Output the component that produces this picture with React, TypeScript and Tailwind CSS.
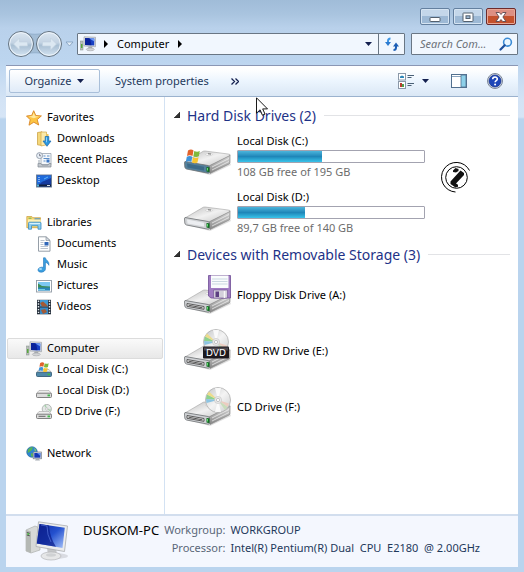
import type { ReactNode } from "react";

type TreeItem = { label: string; icon: ReactNode; active?: boolean };
type TreeGroup = TreeItem & { items: TreeItem[] };
type Drive = { label: string; icon: ReactNode; used?: number; info?: string };

const ComputerIcon = () => (
  <svg className="size-4" viewBox="0 0 16 16">
    <rect x="0.5" y="5" width="2.5" height="9" fill="#b9beba" stroke="#85908a" strokeWidth=".5" />
    <rect x="1" y="8" width="1.5" height="4" fill="#58a83c" />
    <path d="M4 .8 15.5 1.3v9.4L4 10z" fill="#e2e4e6" stroke="#8d949c" strokeWidth=".6" />
    <path d="M5 2l9.3.4v7L5 9z" fill="#1740c4" />
    <path d="M5 2l5 .2 1.5 7L5 9z" fill="#0a239a" />
    <path d="M9 2.3l5.3.1v3z" fill="#6f9cf5" />
    <path d="M8.5 10.6h3.5l.6 2.2H8z" fill="#a7abb0" />
    <ellipse cx="10.3" cy="13.4" rx="4" ry="1.4" fill="#d2d4d6" stroke="#9a9da1" strokeWidth=".5" />
  </svg>
);

const StarIcon = () => (
  <svg className="size-4" viewBox="0 0 16 16">
    <path
      d="M7.7.7l2.1 4.8 5.6.4-4.2 3.7 1.5 5.4-4.9-2.8L3 15.2l1.2-5.5L.5 6l5.2-.6z"
      fill="#fcc544"
      stroke="#d98728"
      strokeWidth=".9"
      strokeLinejoin="round"
    />
    <path d="M7.7 2.6l1.4 3.6 3.8.4-5.1 1.7-4.9-1.7 3.6-.5z" fill="#ffe9a0" />
  </svg>
);

const DownloadsIcon = () => (
  <svg className="size-4" viewBox="0 0 16 16">
    <path d="M1.5 1.5 6 .8v13.7l-4.5-.7z" fill="#f4d77b" stroke="#c79b38" strokeWidth=".7" />
    <path d="M5 1h5.5v12.8L5 15z" fill="#fbe9a8" stroke="#d1a746" strokeWidth=".7" />
    <path d="M10 3h2.5v8H10z" fill="#e8c35e" />
    <path d="M9.2 5.5h3.6V10H15l-4 5.3L7 10h2.2z" fill="#2b96df" stroke="#1767ad" strokeWidth=".7" />
    <path d="M10 6.3h1v5h-1z" fill="#8fd3fb" />
  </svg>
);

const RecentIcon = () => (
  <svg className="size-4" viewBox="0 0 16 16">
    <path d="M5 1.5h10v11H5z" fill="#f4f7fa" stroke="#9aa5b0" strokeWidth=".8" />
    <path d="M7.5 4h2M11 4h2.5M7.5 6.5h6M7.5 9h2" stroke="#5d8ec7" />
    <rect x="10.5" y="7.5" width="3" height="3" fill="#3b76c4" />
    <circle cx="3.6" cy="3.6" r="3" fill="#e8eff6" stroke="#8e9aa8" strokeWidth=".9" />
    <path d="M3.6 1.8v2h1.5" fill="none" stroke="#556" strokeWidth=".7" />
    <path d="M2 11.5h3l1 1.5h6l1-1.5h2v3.5H2z" fill="#c0c5cb" stroke="#838b94" strokeWidth=".7" />
    <path d="M3 8v3.5" stroke="#9aa5b0" />
  </svg>
);

const DesktopIcon = () => (
  <svg className="size-4" viewBox="0 0 16 16">
    <rect x=".5" y="2" width="15" height="12" fill="#1a4ab5" stroke="#6e7f95" />
    <path d="M1 2.5h14v4L6 9 1 12z" fill="#1f6bdc" />
    <path d="M6 9l9-4v7H4z" fill="#153b9e" />
    <path d="M3 4v1M3 6v1M3 8v1" stroke="#e4f1ff" />
    <path d="M8 6l4-2" stroke="#63b4f7" />
    <rect x="1" y="11.5" width="14" height="2" fill="#102040" />
    <rect x="1" y="11.5" width="2" height="2" fill="#57b6dc" />
    <path d="M11 12.5h3" stroke="#d7dfe8" />
  </svg>
);

const LibrariesIcon = () => (
  <svg className="size-4" viewBox="0 0 16 16">
    <path d="M.8 1.5h5l1 1.2h7.7v10H.8z" fill="#f6d673" stroke="#c89c3a" strokeWidth=".7" />
    <path d="M2 4.5h12.8v5H2z" fill="#fdf0b8" />
    <path d="M2.5 3.2h3" stroke="#6fb64a" />
    <path d="M8.5 3.8H14" stroke="#4b93cf" />
    <path
      d="M2.5 8.2q0-1 1-1H14q1 0 1 1v6h-3v-3.5H5.5v3.5h-3z"
      fill="#8cccee"
      stroke="#3a8cc0"
      strokeWidth=".8"
    />
    <path d="M3.5 8.5H14" stroke="#d7f1fd" />
  </svg>
);

const DocumentsIcon = () => (
  <svg className="size-4" viewBox="0 0 16 16">
    <path d="M2.5.8H10l4 3.7v10.7H2.5z" fill="#fff" stroke="#8a949e" strokeWidth=".9" />
    <path d="M10 .8v3.7h4z" fill="#d5dbe1" stroke="#8a949e" strokeWidth=".7" />
    <path d="M4.5 4.5h4M4.5 6.5h3M4.5 8.5h3M4.5 10.5H12M4.5 12.5H12" stroke="#a7b4c3" strokeWidth=".8" />
    <rect x="8.5" y="6" width="4" height="3.5" fill="#2f66b8" />
  </svg>
);

const MusicIcon = () => (
  <svg className="size-4" viewBox="0 0 16 16">
    <path
      d="M7.5.8h1.8c.5 2.6 4.3 3.2 3.6 7.5-.7-1.8-2-2.6-3.5-2.9v6.5c0 1.9-1.9 3.3-4.2 3.3-2 0-3.2-1-3.2-2.3 0-1.7 2.3-3.3 5.5-2.6z"
      fill="#3a9fe0"
      stroke="#2273b8"
      strokeWidth=".6"
    />
    <ellipse cx="4.5" cy="12" rx="1.6" ry="1" fill="#a3dcfb" />
  </svg>
);

const PicturesIcon = () => (
  <svg className="size-4" viewBox="0 0 16 16">
    <rect x=".5" y="2.5" width="15" height="11.5" fill="#fff" stroke="#909aa4" strokeWidth=".9" />
    <rect x="2" y="4" width="12" height="8.5" fill="#7cc8f2" />
    <path d="M2 5.5l4 2.5 8 .5V10H2z" fill="#3d8c55" />
    <path d="M2 9.5h12v3H2z" fill="#2a86b8" />
    <path d="M2 11.5h7" stroke="#70cfe5" />
  </svg>
);

const VideosIcon = () => (
  <svg className="size-4" viewBox="0 0 16 16">
    <rect x="1" y=".8" width="14" height="14.5" fill="#26303c" />
    <rect x="4" y="1" width="8" height="6.5" fill="#3f9bd6" />
    <rect x="4" y="8.5" width="8" height="6.5" fill="#3789c4" />
    <path d="M4 4l3-1.5L10 5l2 2.5H6zM5 11l4-1 2 3-4 2z" fill="#a35a35" />
    <path d="M2.5 1.5v14M13.5 1.5v14" stroke="#e8edf2" strokeWidth="1.4" strokeDasharray="1.4 1.4" />
  </svg>
);

const Flag = () => (
  <g>
    <path d="M3 1.5C5 .3 7 .3 8.500 1.5L7.5 7C6 6 4 6 2 7z" fill="#e2622b" />
    <path d="M9.3 2c1.8 1 3.8 1 5.5 0l-1 5.3c-1.8 1-3.7 1-5.5 0z" fill="#7fb93c" />
    <path d="M1.8 7.8c2-1 4-1 5.5 0l-1 5.2c-1.6-1-3.6-1-5.500 0z" fill="#3f93d8" />
    <path d="M8 8.3c1.8 1 3.8 1 5.5 0l-1 5.2c-1.7 1-3.7 1-5.5 0z" fill="#f7c52f" />
  </g>
);

const SmallDriveIcon = ({ kind }: { kind: "windows" | "plain" | "cd" }) => (
  <svg className="size-4" viewBox="0 0 16 16">
    {kind === "cd" && (
      <g>
        <circle cx="10.8" cy="5" r="4.6" fill="#e4e8e6" stroke="#9ba09e" strokeWidth=".7" />
        <path d="M10.8 5 8 1.5 10 .8zM10.8 5l3.5 2.5.7-2z" fill="#a9d1ae" />
        <circle cx="10.8" cy="5" r="1.2" fill="#fff" stroke="#999" strokeWidth=".5" />
      </g>
    )}
    <path d="M3 7.5h10l2.5 3H.5z" fill="#ededed" stroke="#a5a5a5" strokeWidth=".6" />
    <rect
      x=".5"
      y="10.2"
      width="15"
      height="4.3"
      rx="1"
      fill={kind === "windows" ? "#4f87a8" : "#dcdcdc"}
      stroke={kind === "windows" ? "#345d78" : "#757575"}
      strokeWidth=".9"
    />
    {kind === "cd" && <path d="M2.5 12.3h7" stroke="#666" />}
    <rect x="11.5" y="11.5" width="2.5" height="1.8" fill="#41b84a" />
    {kind === "windows" && (
      <g transform="translate(2 -.2) scale(.72)">
        <Flag />
      </g>
    )}
  </svg>
);

const NetworkIcon = () => (
  <svg className="size-4" viewBox="0 0 16 16">
    <circle cx="6" cy="6" r="5.3" fill="#2c86d3" stroke="#216196" strokeWidth=".6" />
    <path d="M2 3.5C4 1 6 1 7 1.5L6 4 3.5 6 1.5 7zM5 7l3 1-1.5 3L5 10z" fill="#57b35a" />
    <path d="M8 2l2.5 2L9 6z" fill="#7cc873" />
    <rect x="7.2" y="6" width="8.3" height="6.8" fill="#dce1e6" stroke="#747d88" strokeWidth=".7" />
    <rect x="8.3" y="7" width="6.1" height="4.7" fill="#1538b5" />
    <path d="M11 7h3.4v3z" fill="#5f8ef0" />
    <path d="M9 14.5h5l-1-1.7h-3z" fill="#a8aeb5" />
  </svg>
);

const DriveBody = ({ slot, blue }: { slot?: boolean; blue?: boolean }) => (
  <g>
    <path d="M3 37l23 6 21-10-2-4z" fill="#c9c9c9" opacity=".6" />
    <path d="M1 30 18 20q1-1 3-1l23 3q3 0 2 2L25 34z" fill="url(#drive-top)" stroke="#a3a3a3" strokeWidth=".6" />
    <path d="M25 34 46 23.5v7q0 1-1 1.5L26 41.5z" fill="url(#drive-side)" stroke="#7d7d7d" strokeWidth=".6" />
    <path
      d="M1 29.5 24 33.5q1.5.4 1.5 2v4q0 2-1.5 1.7L2.5 37Q1 36.5.8 35L.5 31q0-1.5.5-1.5z"
      fill={blue ? "#54809b" : "#cfd1d4"}
      stroke="#6f7275"
      strokeWidth=".8"
    />
    {slot ? (
      <path d="M3 32.5l17 3v2.8l-17-3z" fill="#eee" stroke="#4d4d4d" strokeWidth=".9" />
    ) : (
      <path d="M3 31.5l17 3.2v3.8l-16.5-3z" fill={blue ? "#3d6a88" : "#eceef1"} />
    )}
    {slot && <path d="M4.5 34.2l14 2.6" stroke="#555" />}
    <path d="M22.5 35v4.5l3 .8v-5z" fill="#176a26" />
    <path d="M23.5 36v2.5" stroke="#5ee06d" />
    <path d="M28 35l17-8.5M28 38l17-8.5" stroke="#f3f3f3" strokeWidth=".7" />
    <ellipse cx="25" cy="22.5" rx="3.2" ry="1.2" fill="#f7f7f7" stroke="#bbb" strokeWidth=".5" />
    <path d="M24 21.8l3 .3" stroke="#555" strokeWidth=".8" />
  </g>
);

const Disc = ({ cx, cy }: { cx: number; cy: number }) => (
  <g>
    <circle cx={cx} cy={cy} r="12.5" fill="url(#disc)" stroke="#a8a8a8" strokeWidth=".7" />
    <g transform={`translate(${cx} ${cy})`}>
      <path d="M0 0-11-5.5-12-1z" fill="#8fd28d" />
      <path d="M0 0-9-8.5-11-5.5z" fill="#ecdc8c" />
      <path d="M0 0-12-1-11.5 3z" fill="#8cc4e2" />
      <path d="M0 0 11 3.5 9.5 7z" fill="#ecccc0" />
      <path d="M0 0 9.5 7 7 10z" fill="#c8dcba" />
      <path d="M0 0-3-12 3-12z" fill="#fff" opacity=".8" />
      <path d="M0 0-3 12 3 12z" fill="#fff" opacity=".8" />
      <circle r="3.6" fill="#e9e9e9" stroke="#bbb" strokeWidth=".5" />
      <circle r="1.6" fill="#fff" stroke="#999" strokeWidth=".5" />
    </g>
  </g>
);

const WindowsDrive = () => (
  <svg className="size-12 shrink-0" viewBox="0 0 48 48">
    <DriveBody blue />
    <g transform="translate(1 17)">
      <Flag />
    </g>
  </svg>
);

const PlainDrive = () => (
  <svg className="size-12 shrink-0" viewBox="0 0 48 48">
    <DriveBody />
  </svg>
);

const FloppyDrive = () => (
  <svg className="size-12 shrink-0" viewBox="0 0 48 48">
    <DriveBody slot />
    <path d="M24.5 4.5h22V27H27l-2.5-2z" fill="#a07cc2" stroke="#6f4d94" strokeWidth=".8" />
    <path d="M27 4.5h17.5V17H27z" fill="#fafcfd" />
    <path d="M28 8h15.5M28 10.5h15.5M28 13h15.5" stroke="#b5c9d4" strokeWidth=".7" />
    <path d="M29.5 19h14v8h-14z" fill="#d3d0da" stroke="#6f4d94" strokeWidth=".6" />
    <path d="M31.5 20.5H35V26h-3.5z" fill="#5c3f82" />
    <path d="M40.5 20v7" stroke="#f7f7f7" strokeWidth="1.5" />
  </svg>
);

const DvdDrive = () => (
  <svg className="size-12 shrink-0" viewBox="0 0 48 48">
    <DriveBody slot />
    <Disc cx={32} cy={15} />
    <rect x="19" y="19.5" width="26" height="12" rx="1" fill="#1c191e" />
    <path d="M20 20.5h24v3H20z" fill="#4d494f" />
    <text x="32" y="29" textAnchor="middle" fontSize="9" fontFamily="DejaVu Sans, sans-serif" fill="#fff">
      DVD
    </text>
  </svg>
);

const CdDrive = () => (
  <svg className="size-12 shrink-0" viewBox="0 0 48 48">
    <DriveBody slot />
    <Disc cx={34} cy={17} />
  </svg>
);

const BigComputer = () => (
  <svg className="h-10 w-11" viewBox="0 0 44 40">
    <ellipse cx="30" cy="35" rx="13" ry="3" fill="#d9dbe2" />
    <path d="M1 9l9-4 5 2v22l-9 3-5-2z" fill="#d7d9d7" stroke="#a4a7a4" strokeWidth=".6" />
    <path d="M1 9l5 1.5V32l-5-2z" fill="#b4b8b4" />
    <path d="M1.8 11.5l3 .8M1.8 14l3 .8" stroke="#515651" />
    <circle cx="3.2" cy="13" r="1" fill="#4db848" />
    <path d="M22 27h9l1 7h-9z" fill="#c4c6c8" />
    <ellipse cx="26" cy="35" rx="10" ry="4" fill="#e6e7e8" stroke="#b3b5b7" strokeWidth=".7" />
    <ellipse cx="26" cy="34" rx="5" ry="1.7" fill="#cfd1d3" />
    <path d="M13.5.8 42.5 5 39.5 30.5 11 25.5z" fill="#eceded" stroke="#a9acaf" strokeWidth=".8" />
    <path d="M14.5 3 39.8 6.8 37.5 27 11.8 22.5z" fill="url(#screen)" />
    <path d="M14.5 3 24 4.5Q25 17 31 25.8L11.8 22.5z" fill="#0c1f8c" opacity=".75" />
    <path d="M16 4l6 1q0 9 4 16" fill="none" stroke="#5f7fe5" strokeWidth=".6" />
  </svg>
);

// Gradients shared by the drawings above
const Gradients = () => (
  <svg className="absolute size-0">
    <defs>
      <linearGradient id="drive-top" x1="0" y1="0" x2="1" y2="1">
        <stop offset="0" stopColor="#bdbdbd" />
        <stop offset=".5" stopColor="#f1f1f1" />
        <stop offset="1" stopColor="#c4c4c4" />
      </linearGradient>
      <linearGradient id="drive-side" x1="0" y1="0" x2="0" y2="1">
        <stop offset="0" stopColor="#d9d9d9" />
        <stop offset="1" stopColor="#858585" />
      </linearGradient>
      <linearGradient id="disc" x1="0" y1="0" x2="1" y2="1">
        <stop offset="0" stopColor="#c2c4c6" />
        <stop offset=".5" stopColor="#f4f4f4" />
        <stop offset="1" stopColor="#c9cbcc" />
      </linearGradient>
      <linearGradient id="screen" x1="0" y1="0" x2="1" y2="1">
        <stop offset="0" stopColor="#10279f" />
        <stop offset=".5" stopColor="#2451cf" />
        <stop offset="1" stopColor="#a8c4fa" />
      </linearGradient>
      <linearGradient id="nav" x1="0" y1="0" x2="0" y2="1">
        <stop offset="0" stopColor="#dce7f1" />
        <stop offset=".45" stopColor="#c3d3e3" />
        <stop offset=".55" stopColor="#a9bfd3" />
        <stop offset="1" stopColor="#d5e5f3" />
      </linearGradient>
    </defs>
  </svg>
);

const groups: TreeGroup[] = [
  {
    label: "Favorites",
    icon: <StarIcon />,
    items: [
      { label: "Downloads", icon: <DownloadsIcon /> },
      { label: "Recent Places", icon: <RecentIcon /> },
      { label: "Desktop", icon: <DesktopIcon /> },
    ],
  },
  {
    label: "Libraries",
    icon: <LibrariesIcon />,
    items: [
      { label: "Documents", icon: <DocumentsIcon /> },
      { label: "Music", icon: <MusicIcon /> },
      { label: "Pictures", icon: <PicturesIcon /> },
      { label: "Videos", icon: <VideosIcon /> },
    ],
  },
  {
    label: "Computer",
    icon: <ComputerIcon />,
    active: true,
    items: [
      { label: "Local Disk (C:)", icon: <SmallDriveIcon kind="windows" /> },
      { label: "Local Disk (D:)", icon: <SmallDriveIcon kind="plain" /> },
      { label: "CD Drive (F:)", icon: <SmallDriveIcon kind="cd" /> },
    ],
  },
  { label: "Network", icon: <NetworkIcon />, items: [] },
];

const hardDrives: Drive[] = [
  { label: "Local Disk (C:)", icon: <WindowsDrive />, used: 45, info: "108 GB free of 195 GB" },
  { label: "Local Disk (D:)", icon: <PlainDrive />, used: 36, info: "89,7 GB free of 140 GB" },
];

const removable: Drive[] = [
  { label: "Floppy Disk Drive (A:)", icon: <FloppyDrive /> },
  { label: "DVD RW Drive (E:)", icon: <DvdDrive /> },
  { label: "CD Drive (F:)", icon: <CdDrive /> },
];

const TitleBar = () => (
  <header className="flex h-[29px] items-start justify-end gap-[3px] pt-2 pr-2">
    <button
      aria-label="Minimize"
      className="flex h-[17px] w-[30px] items-center justify-center rounded-[2px] border border-[#64809f] bg-linear-to-b from-[#c4d7ea] from-50% to-[#9db9d5] to-50% shadow-[inset_0_0_0_1px_#d5e4f2]"
    >
      <svg className="h-3 w-3" viewBox="0 0 12 12">
        <rect x="1" y="6.5" width="10" height="4" rx=".5" fill="#fff" stroke="#53606e" />
      </svg>
    </button>
    <button
      aria-label="Maximize"
      className="flex h-[17px] w-[30px] items-center justify-center rounded-[2px] border border-[#64809f] bg-linear-to-b from-[#c4d7ea] from-50% to-[#9db9d5] to-50% shadow-[inset_0_0_0_1px_#d5e4f2]"
    >
      <svg className="h-3 w-3" viewBox="0 0 12 12">
        <rect x="1" y="2" width="10" height="8.5" rx=".5" fill="#fff" stroke="#53606e" />
        <rect x="4" y="4.8" width="4" height="2.7" fill="#9db9d5" stroke="#53606e" />
      </svg>
    </button>
    <button
      aria-label="Close"
      className="flex h-[17px] w-[30px] items-center justify-center rounded-[2px] border border-[#6d2b2c] bg-linear-to-b from-[#dd8f82] from-50% to-[#c4512c] to-50% shadow-[inset_0_0_0_1px_#e8a795]"
    >
      <svg className="h-3 w-3" viewBox="0 0 12 12">
        <path
          d="M1 1.5h3.3L6 3.5l1.7-2H11L7.9 6l3.1 4.5H7.700L6 8.5l-1.7 2H1L4.1 6z"
          fill="#fff"
          stroke="#5d4a50"
          strokeWidth=".9"
        />
      </svg>
    </button>
  </header>
);

const AddressRow = () => (
  <div className="flex h-9 items-start gap-1.5 px-1.5">
    <div className="-mr-[5px] flex h-[30px] w-[70px] shrink-0">
      <svg className="h-[30px] w-[70px]" viewBox="0 0 70 30">
        <path d="M15 3.5Q29 7 43 3.5v22Q29 22 15 25.5z" fill="#a3bdd6" stroke="#8eabc8" strokeWidth=".8" />
        <circle cx="15" cy="15" r="12.5" fill="url(#nav)" stroke="#64727f" />
        <circle cx="43" cy="15" r="12.5" fill="url(#nav)" stroke="#64727f" />
        <circle cx="15" cy="15" r="11.3" fill="none" stroke="#edf4fa" />
        <circle cx="43" cy="15" r="11.3" fill="none" stroke="#edf4fa" />
        <path d="M7.5 15l6-6v4h8v4h-8v4z" fill="#dce8f2" stroke="#c3d3e1" strokeWidth=".7" />
        <path d="M50.5 15l-6-6v4h-8v4h8v4z" fill="#dce8f2" stroke="#c3d3e1" strokeWidth=".7" />
        <path d="M60 13h7l-3.5 4z" fill="#e3eef8" stroke="#7f9cbb" strokeWidth=".8" />
      </svg>
    </div>
    <div className="mt-1 flex h-[22px] min-w-0 flex-1 rounded-[1px] border border-[#697684] bg-[#f1f7fe]">
      <nav className="flex min-w-0 flex-1 items-center pl-0.5">
        <ComputerIcon />
        <svg className="ml-2 h-2 w-1" viewBox="0 0 4 8">
          <path d="M0 0l4 4-4 4z" fill="#000" />
        </svg>
        <a href="#computer" className="mx-[9px]">
          Computer
        </a>
        <svg className="h-2 w-1" viewBox="0 0 4 8">
          <path d="M0 0l4 4-4 4z" fill="#000" />
        </svg>
        <button aria-label="Previous locations" className="mr-1.5 ml-auto">
          <svg className="h-1 w-[7px]" viewBox="0 0 7 4">
            <path d="M0 0h7L3.5 4z" fill="#14204f" />
          </svg>
        </button>
      </nav>
      <button aria-label="Refresh" className="flex w-[26px] items-center justify-center border-l border-[#697684]">
        <svg className="size-4" viewBox="0 0 16 16">
          <path d="M6.5 2.5C4.500 2.5 4 3.5 4 5v2" fill="none" stroke="#3f96e4" strokeWidth="2" />
          <path d="M1 6h6l-3 4z" fill="#2c7bd0" />
          <path d="M9.5 14c2 0 2.500-1 2.500-2.500V9.500" fill="none" stroke="#1c5eb5" strokeWidth="2" />
          <path d="M9 10.500h6l-3-4z" fill="#1c5eb5" />
        </svg>
      </button>
    </div>
    <div className="mt-1 flex h-[22px] w-[107px] shrink-0 items-center rounded-[1px] border border-[#697684] bg-[#f1f7fe] pr-1 pl-2">
      <input
        aria-label="Search Computer"
        placeholder="Search Com..."
        className="min-w-0 flex-1 bg-transparent italic outline-none placeholder:text-[#6c7178]"
      />
      <svg className="size-[14px] shrink-0" viewBox="0 0 14 14">
        <circle cx="8.5" cy="5.2" r="3.9" fill="#eaf6ff" stroke="#3a8bd6" strokeWidth="1.6" />
        <path d="M5.7 8.2 1.5 12.5" stroke="#1d4f9c" strokeWidth="2.2" strokeLinecap="round" />
      </svg>
    </div>
  </div>
);

const Toolbar = () => (
  <div className="flex h-8 shrink-0 items-center border-t border-b border-t-[#8b97b4] border-b-[#9bb2ce] bg-linear-to-b from-white from-10% via-[#ecf5fe] via-50% to-[#dae7f5] px-[3px] text-[#1e395b]">
    <button className="flex h-6 w-[91px] items-center justify-center gap-1.5 rounded-[2px] border border-[#a9bfd9] bg-linear-to-b from-white to-[#e0ebf8]">
      Organize
      <svg className="h-1 w-[7px]" viewBox="0 0 7 4">
        <path d="M0 0h7L3.5 4z" fill="#14204f" />
      </svg>
    </button>
    <button className="ml-[15px]">System properties</button>
    <button aria-label="More commands" className="ml-[22px]">
      <svg className="h-[7px] w-2" viewBox="0 0 8 7">
        <path d="M.5.5l3 3-3 3M4.5.5l3 3-3 3" fill="none" stroke="#14204f" strokeWidth="1.3" />
      </svg>
    </button>
    <button aria-label="Change your view" className="ml-auto flex items-center gap-2">
      <svg className="size-4" viewBox="0 0 16 16">
        <rect x=".5" y=".5" width="7" height="6.5" fill="#fff" stroke="#8b98a8" />
        <path d="M2 5V3.5l2-1 2 1V5z" fill="#2d86b8" />
        <rect x=".5" y="8.5" width="7" height="7" fill="#fff" stroke="#8b98a8" />
        <path d="M2 10h2v4H2z" fill="#b8402f" />
        <path d="M4 11h2v3H4z" fill="#4e9d4a" />
        <path d="M9.5 2.5H16M9.5 4.5h4M9.5 10.5H16M9.5 12.5h4" stroke="#4a6076" />
      </svg>
      <svg className="h-1 w-[7px]" viewBox="0 0 7 4">
        <path d="M0 0h7L3.5 4z" fill="#14204f" />
      </svg>
    </button>
    <button aria-label="Preview pane" className="ml-[22px]">
      <svg className="size-4" viewBox="0 0 16 16">
        <rect x=".5" y="1.5" width="15" height="13" fill="#fff" stroke="#52708f" />
        <path d="M1 3.5h9" stroke="#8aa5c0" />
        <rect x="10" y="2" width="5" height="12" fill="#8dd0e9" stroke="#52708f" strokeWidth=".8" />
      </svg>
    </button>
    <button aria-label="Get help" className="mr-3 ml-5">
      <svg className="size-4" viewBox="0 0 16 16">
        <circle cx="8" cy="8" r="7.5" fill="#d7dde6" stroke="#7b8698" />
        <circle cx="8" cy="8" r="6" fill="#1c45b8" stroke="#142f86" strokeWidth=".7" />
        <path
          d="M5.7 6.3C5.7 3.3 10.4 3.4 10.3 6c0 1.6-2.2 1.6-2.2 3.3"
          fill="none"
          stroke="#fff"
          strokeWidth="1.6"
        />
        <circle cx="8.1" cy="11.4" r="1" fill="#fff" />
      </svg>
    </button>
  </div>
);

const Tree = () => (
  <nav className="flex w-[159px] shrink-0 flex-col gap-[21px] border-r border-[#d3e2f3] px-px pt-2.5">
    {groups.map((group) => (
      <ul key={group.label}>
        <li>
          <a
            href="#computer"
            className={
              group.active
                ? "flex h-[21px] items-center gap-[5px] rounded-[2px] border border-[#dcdcdc] bg-linear-to-b from-[#fafafa] to-[#e8e8e8] pl-[18px]"
                : "flex h-[21px] items-center gap-[5px] pl-[19px]"
            }
          >
            {group.icon}
            {group.label}
          </a>
        </li>
        {group.items.map((item) => (
          <li key={item.label}>
            <a href="#computer" className="flex h-[21px] items-center gap-[5px] pl-[29px]">
              {item.icon}
              {item.label}
            </a>
          </li>
        ))}
      </ul>
    ))}
  </nav>
);

const DriveSection = ({ title, drives }: { title: string; drives: Drive[] }) => (
  <section className="mb-1">
    <h2 className="mb-[3px] flex h-5 items-center text-[14px] text-[#1e3287]">
      <svg className="mr-[7px] size-[6px]" viewBox="0 0 6 6">
        <path d="M6 0v6H0z" fill="#333" stroke="#111" strokeWidth=".5" />
      </svg>
      {title}
      <span className="ml-2 h-px flex-1 bg-[#e2e3e6]" />
    </h2>
    <ul className="pl-2.5">
      {drives.map((drive) => (
        <li key={drive.label} className="flex h-14 items-center gap-[5px]">
          {drive.icon}
          <div className="flex min-w-0 flex-1 flex-col">
            <span className="leading-[18px]">{drive.label}</span>
            {drive.info && (
              <>
                <div className="h-[13px] w-[188px] max-w-full rounded-[1px] border border-[#a3a3b0] bg-white">
                  <div
                    className="h-full bg-linear-to-b from-[#4bb5dc] via-[#1f86b8] via-50% to-[#39c4ea]"
                    style={{ width: `${drive.used}%` }}
                  />
                </div>
                <span className="leading-[18px] text-[#6d6d6d]">{drive.info}</span>
              </>
            )}
          </div>
        </li>
      ))}
    </ul>
  </section>
);

const PhoneMark = () => (
  <svg className="absolute top-[65px] right-[47px] size-[31px]" viewBox="0 0 31 31">
    <circle cx="16.5" cy="15.5" r="10.8" fill="none" stroke="#000" />
    <path d="M29.5 8.5A14.8 14.8 0 1 0 15.5 30" fill="none" stroke="#000" />
    <path
      d="M13 8.500 15.500 6l3 1v2l-2.500 1.500-3-.5zM20.500 8.500l3.500 2.500v2L16 21.500l2 1.200v2l-2.500.8-5-3.500v-2.500z"
      fill="#111"
    />
  </svg>
);

const Pointer = () => (
  <svg className="absolute top-0 left-[91px] h-[19px] w-3" viewBox="0 0 12 19">
    <path d="M.5.8V16.200l3.600-3.400 2.300 5.400L9 17.100l-2.300-5.200h4.800z" fill="#fff" stroke="#000" strokeWidth=".9" />
  </svg>
);

const Details = () => (
  <footer className="flex h-[53px] shrink-0 items-center border-t-2 border-[#d2deee] bg-[#f4f7fe] pb-0.5 pl-[19px]">
    <BigComputer />
    <div className="ml-3.5 grid grid-cols-[auto_auto_auto] gap-x-[5px] pb-1 text-[#1e395b]">
      <span className="text-[13px] leading-[18px] text-black">DUSKOM-PC</span>
      <span className="text-right leading-[18px] text-[#5a6779]">Workgroup:</span>
      <span className="leading-[18px]">WORKGROUP</span>
      <span className="col-start-2 text-right leading-[18px] text-[#5a6779]">Processor:</span>
      <span className="leading-[18px] whitespace-pre">{"Intel(R) Pentium(R) Dual  CPU  E2180  @ 2.00GHz"}</span>
    </div>
  </footer>
);

const App = () => (
  <div className="flex min-h-screen flex-col bg-[#bad4ee] bg-[linear-gradient(#a0bcd8_0,#a9c4df_14px,#b9d1eb_28px,#bcd5ef_60px,#d3e3f5_100px,#d6e5f6_117px,#bad4ee_119px)] font-['Noto_Sans','Open_Sans',sans-serif] text-[11px] text-black">
    <Gradients />
    <TitleBar />
    <AddressRow />
    <div className="mx-1.5 mb-[5px] flex flex-1 flex-col bg-white">
      <Toolbar />
      <div className="flex flex-1">
        <Tree />
        <main className="relative min-w-0 flex-1 pt-2 pr-2 pl-[9px]">
          <DriveSection title="Hard Disk Drives (2)" drives={hardDrives} />
          <DriveSection title="Devices with Removable Storage (3)" drives={removable} />
          <Pointer />
          <PhoneMark />
        </main>
      </div>
      <Details />
    </div>
  </div>
);

export default App;
